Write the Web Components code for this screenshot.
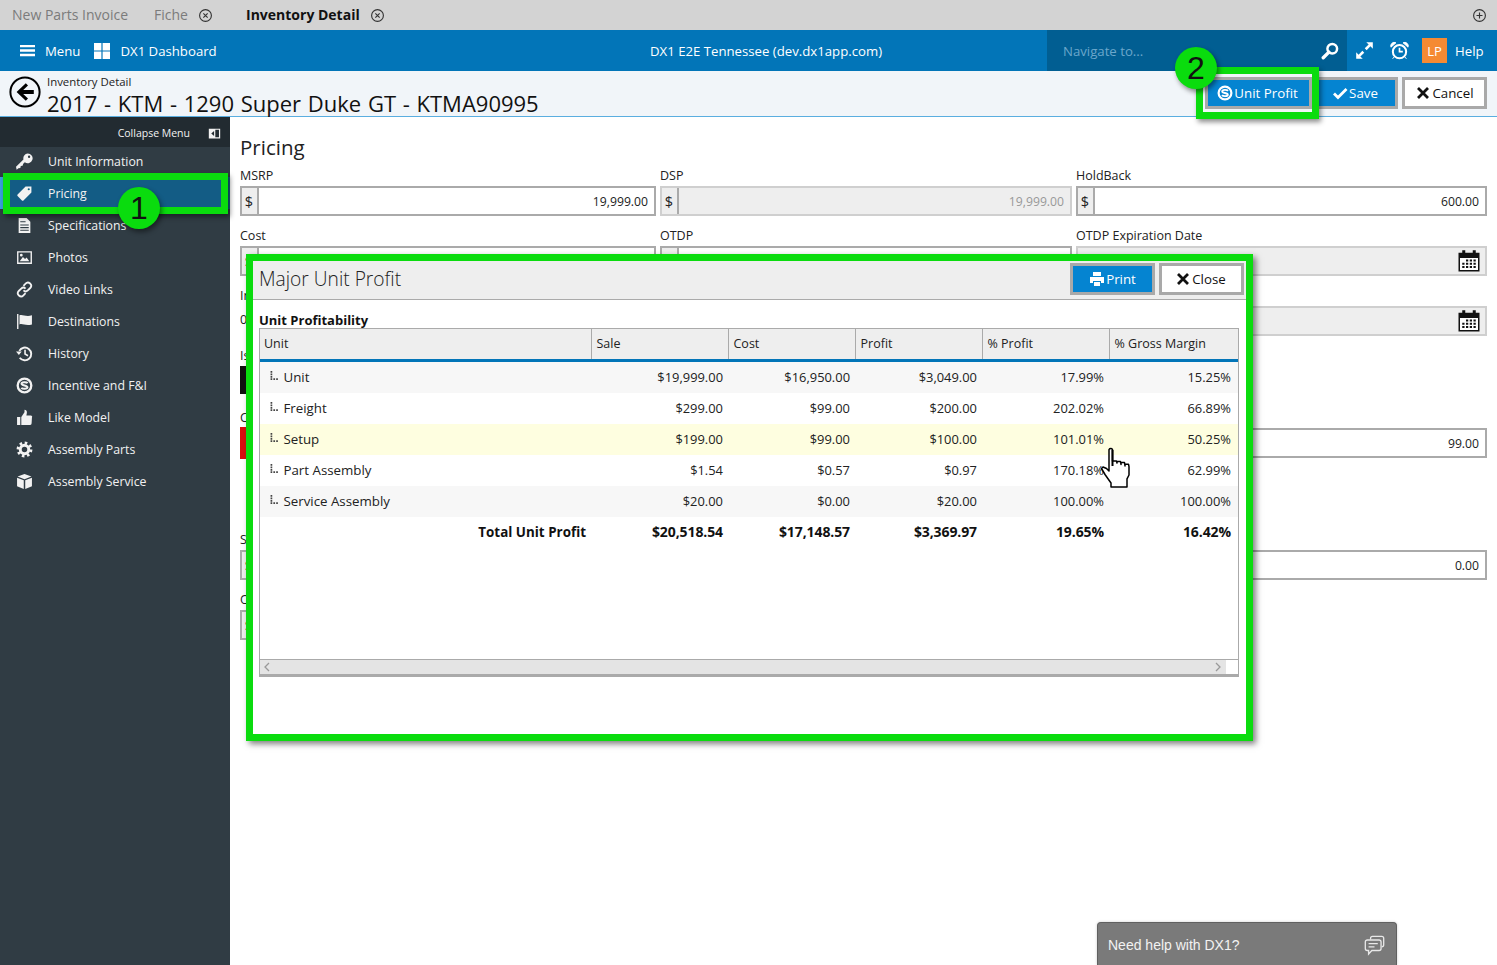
<!DOCTYPE html>
<html>
<head>
<meta charset="utf-8">
<title>Inventory Detail</title>
<style>
    html, body { margin: 0; height: 965px; overflow: hidden; background: #fff; }
    body { font-family: "Open Sans", "Noto Sans", sans-serif; font-size: 12.5px; color: #222; position: relative; }
    .shell { display: flex; height: 848px; }
</style>
</head>
<body>
<dx-tabs></dx-tabs>
<dx-nav></dx-nav>
<dx-titlebar></dx-titlebar>
<div class="shell">
    <dx-sidebar></dx-sidebar>
    <dx-pricing></dx-pricing>
</div>
<dx-modal></dx-modal>
<dx-callout kind="box" style="left:3px;top:173px;width:225px;height:41px"></dx-callout>
<dx-callout kind="box" style="left:1196px;top:67px;width:123px;height:52px"></dx-callout>
<dx-callout kind="num" style="left:118px;top:187px">1</dx-callout>
<dx-callout kind="num" style="left:1175px;top:47px">2</dx-callout>
<dx-hand></dx-hand>
<dx-chat></dx-chat>

<script>
const ICONS = {
    close: '<circle cx="8" cy="8" r="6.3" fill="none" stroke="currentColor" stroke-width="1.2"/><path d="M5.7 5.7l4.6 4.6M10.3 5.7l-4.6 4.6" stroke="currentColor" stroke-width="1.2"/>',
    plus: '<circle cx="8" cy="8" r="6.3" fill="none" stroke="currentColor" stroke-width="1.2"/><path d="M8 4.8v6.4M4.8 8h6.4" stroke="currentColor" stroke-width="1.2"/>',
    menu: '<path d="M0 2h16v2.6H0zM0 6.7h16v2.6H0zM0 11.4h16V14H0z"/>',
    grid: '<path d="M0 0h7.4v7.4H0zM8.6 0H16v7.4H8.6zM0 8.6h7.4V16H0zM8.6 8.6H16V16H8.6z"/>',
    search: '<circle cx="10" cy="6" r="4.3" fill="none" stroke="currentColor" stroke-width="2.2"/><path d="M7 9L2 14" stroke="currentColor" stroke-width="3" stroke-linecap="round"/>',
    expand: '<path d="M9.5 1H15v5.5l-2-2-3.2 3.2-1.6-1.6L11.5 3zM6.5 15H1V9.5l2 2 3.2-3.2 1.6 1.6L4.500 13z"/>',
    alarm: '<circle cx="8" cy="9" r="5.6" fill="none" stroke="currentColor" stroke-width="1.7"/><path d="M8 5.700V9h2.800" fill="none" stroke="currentColor" stroke-width="1.4"/><path d="M.8 5.200A3 3 0 0 1 5 1.500zM15.200 5.200A3 3 0 0 0 11 1.500zM3.800 13l-1.600 2M12.200 13l1.600 2" fill="currentColor" stroke="currentColor" stroke-width=".8"/>',
    back: '<circle cx="8" cy="8" r="7.3" fill="none" stroke="currentColor" stroke-width="1"/><path d="M8.400 3.600L3.800 8l4.600 4.400 1.100-1.100L7.100 9h5.300V7H7.100l2.400-2.300z"/>',
    profit: '<circle cx="8" cy="8" r="6.400" fill="none" stroke="currentColor" stroke-width="2.200"/><path d="M11 5.800C10 4.600 5.200 4.400 5.200 6.400 5.200 8.200 10.800 7.800 10.800 9.700 10.800 11.600 6 11.400 5 10.200" fill="none" stroke="currentColor" stroke-width="1.900"/>',
    check: '<path d="M2 8.500l4 4L14.500 4" fill="none" stroke="currentColor" stroke-width="2.800"/>',
    cross: '<path d="M3 3l10 10M13 3L3 13" fill="none" stroke="currentColor" stroke-width="2.800"/>',
    print: '<path d="M4 1h8v4H4zM1 6h14v6h-3v-2H4v2H1zM5 11h6v4H5z"/>',
    key: '<path fill-rule="evenodd" d="M11 .4a4.600 4.600 0 1 1-2.700 8.300L6.800 10.200 6.200 12l-1.700.3-.4 1.700-1.800.3L.6 15.800 0 13l7-7A4.600 4.600 0 0 1 11 .4zm1.300 2a1.100 1.100 0 1 0 0 2.200 1.100 1.100 0 0 0 0-2.200z"/>',
    tag: '<path fill-rule="evenodd" d="M9 1.500h5.500V7L7 14.500a1 1 0 0 1-1.400 0L1.500 10.400a1 1 0 0 1 0-1.400zm3 1.500a1 1 0 1 0 0 2 1 1 0 0 0 0-2z"/>',
    doc: '<path fill-rule="evenodd" d="M2.500 1H10l3.500 3.500V15h-11zM4 4v1h5V4zm0 3v1h8V7zm0 2.500v1h8v-1zM4 12v1h8v-1z"/>',
    photo: '<path fill-rule="evenodd" d="M1 2h14v12H1zm1.300 1.300v9.400h11.400V3.300zM3.500 11.500l3-4 2 2 1.500-1.500 2.500 3.500zM5 4.500a1.300 1.300 0 1 1 0 2.600 1.300 1.300 0 0 1 0-2.600z"/>',
    link: '<path d="M7 4.500l2-2a2.900 2.900 0 0 1 4.400 4.100l-2.300 2.300a2.900 2.900 0 0 1-4.100 0M9 11.500l-2 2a2.900 2.900 0 0 1-4.400-4.100l2.300-2.300a2.900 2.900 0 0 1 4.100 0" fill="none" stroke="currentColor" stroke-width="1.700"/>',
    flag: '<path d="M1 1h1.300v14H1zM3.300 2.200C6 .8 9 4 15 2.200v8.600C9 12.500 6 9.500 3.300 10.800z"/>',
    history: '<path d="M3.100 5.500A6 6 0 1 1 3.500 12" fill="none" stroke="currentColor" stroke-width="1.800"/><path d="M0 6.200h5.400L2.700 9.500z"/><path d="M8.500 4.500v4l2.800 1.600" fill="none" stroke="currentColor" stroke-width="1.500"/>',
    thumb: '<path d="M1 7.500h3V15H1zM5 7.500L8 3V.8c1.700 0 2.500 1.200 2.200 3L9.800 6H14a1.300 1.300 0 0 1 1 2l-.3 5.500A1.500 1.500 0 0 1 13.300 15H5z"/>',
    gear: '<circle cx="8" cy="8" r="4" fill="none" stroke="currentColor" stroke-width="2.800"/><circle cx="8" cy="8" r="6.200" fill="none" stroke="currentColor" stroke-width="2.500" stroke-dasharray="2.400 2.470"/>',
    cube: '<path d="M8 1l6.500 2.400L8 5.800 1.500 3.400zM1 4.500l6.300 2.400V15L1 12.500zM15 4.500L8.700 6.900V15l6.300-2.500z"/>',
    collapse: '<path fill-rule="evenodd" d="M1 2h14v12H1zm8 1.500v9h4.500v-9zM7.500 5L4 8l3.500 3z"/>',
    calendar: '<path fill="#fff" d="M2 5h12v9H2z"/><path fill-rule="evenodd" d="M1 2.500h2.500V.8h2v1.700h5V.8h2v1.700H15V15H1zM2 6v8h12V6z"/><path d="M6 7h1.500v1.300H6zM8.500 7H10v1.300H8.500zM11 7h1.500v1.300H11zM3.500 9.200H5v1.300H3.500zM6 9.200h1.500v1.300H6zM8.500 9.200H10v1.300H8.500zM11 9.200h1.500v1.300H11zM3.500 11.400H5v1.300H3.500zM6 11.400h1.500v1.300H6zM8.500 11.400H10v1.300H8.500zM11 11.400h1.500v1.300H11z"/>',
    tree: '<path d="M1 0h3v3H1zM1 4.500h3v3H1zM1 9h3v3H1zM1 13h3v3H1zM6 13h3v3H6zM11 13h3v3h-3z"/>',
    chat: '<path d="M5 3.500V2.500a1.500 1.500 0 0 1 1.500-1.500h7A1.500 1.500 0 0 1 15 2.500v5A1.500 1.500 0 0 1 13.500 9" fill="none" stroke="currentColor" stroke-width="1"/><path d="M2.500 3.800h9A1.500 1.500 0 0 1 13 5.300v5a1.500 1.500 0 0 1-1.500 1.500H6L3.500 14.500v-2.700h-1A1.500 1.500 0 0 1 1 10.300v-5a1.500 1.500 0 0 1 1.500-1.500zM3.500 6.500h7M3.500 9h4.500" fill="none" stroke="currentColor" stroke-width="1"/>'
};

const icon = (name, size, style = '') =>
    `<svg viewBox="0 0 16 16" width="${size}" height="${size}" fill="currentColor" style="flex:none;${style}">${ICONS[name]}</svg>`;

class DxTabs extends HTMLElement {
    connectedCallback() {
        this.attachShadow({ mode: 'open' }).innerHTML = `
            <style>
                :host { display: flex; align-items: center; height: 30px; background: #d3d3d3; font-size: 14px; color: #7b7b7b; }
                span { display: inline-block; margin-top: -2px; }
                svg { color: #333; }
                .first { margin-left: 12px; width: 142px; }
                .second { width: 34px; margin-right: 10px; }
                .active { margin-left: 33px; color: #111; font-weight: 700; width: 114px; white-space: nowrap; margin-right: 10px; }
                .plus { margin: 0 10px 0 auto; }
            </style>
            <span class="first">New Parts Invoice</span>
            <span class="second">Fiche</span>${icon('close', 15)}
            <span class="active">Inventory Detail</span>${icon('close', 15)}
            <span class="plus" style="margin-top:0">${icon('plus', 15, 'display:block')}</span>`;
    }
}

class DxNav extends HTMLElement {
    connectedCallback() {
        this.attachShadow({ mode: 'open' }).innerHTML = `
            <style>
                :host { display: flex; align-items: center; height: 41px; background: #0275b8; color: #fff; font-size: 13.2px; position: relative; }
                .left { display: flex; align-items: center; padding-left: 20px; width: 630px; flex: none; box-sizing: content-box; }
                .center { width: 397px; flex: none; }
                .search { flex: none; width: 300px; height: 41px; box-sizing: border-box; background: #015e92; color: #6ba7cb; display: flex; align-items: center; padding: 0 8px 0 16px; justify-content: space-between; }
                .search svg { color: #fff; }
                .right { display: flex; align-items: center; padding-left: 8px; }
                .lp { width: 25px; height: 25px; background: #f58a33; display: flex; align-items: center; justify-content: center; font-size: 13px; margin: 0 8px 0 13px; }
            </style>
            <div class="left">
                ${icon('menu', 15)}<span style="margin:0 14px 0 10px">Menu</span>
                ${icon('grid', 16)}<span style="margin-left:10px">DX1 Dashboard</span>
            </div>
            <div class="center">DX1 E2E Tennessee (dev.dx1app.com)</div>
            <div class="search"><span>Navigate to...</span>${icon('search', 18)}</div>
            <div class="right">
                ${icon('expand', 19)}<span style="width:16px"></span>${icon('alarm', 19)}
                <span class="lp">LP</span><span>Help</span>
            </div>`;
    }
}

class DxButton extends HTMLElement {
    connectedCallback() {
        const light = this.hasAttribute('light');
        this.attachShadow({ mode: 'open' }).innerHTML = `
            <style>
                :host { display: inline-flex; align-items: center; justify-content: center; gap: 1px; box-sizing: border-box; height: 32px; border: 3px solid #a9a9a9; font-size: 13.3px;
                        background: ${light ? '#fff' : '#0584d1'}; color: ${light ? '#111' : '#fff'}; }
            </style>
            ${icon(this.getAttribute('icon'), 16)}<slot></slot>`;
    }
}

class DxTitlebar extends HTMLElement {
    connectedCallback() {
        this.attachShadow({ mode: 'open' }).innerHTML = `
            <style>
                :host { display: flex; align-items: stretch; height: 46px; box-sizing: border-box; background: #f1f5f9; border-bottom: 1px solid #5aaee0; color: #111; }
                .text { flex: 1; white-space: nowrap; }
                .crumb { font-size: 11.4px; line-height: 14px; margin-top: 4px; color: #222; }
                h1 { margin: 0; font-weight: 400; font-size: 22px; line-height: 28px; word-spacing: 1px; }
                .actions { display: flex; align-items: center; gap: 4px; padding: 0 10px 0 0; margin-top: -1px; }
                .unit { width: 107px; padding-right: 2px; box-sizing: border-box; } .save { width: 82px; padding-right: 4px; } .cancel { width: 85px; }
            </style>
            ${icon('back', 32, 'margin:5px 6px 0 9px;color:#000')}
            <div class="text">
                <div class="crumb">Inventory Detail</div>
                <h1>2017 - KTM - 1290 Super Duke GT - KTMA90995</h1>
            </div>
            <div class="actions">
                <dx-button class="unit" icon="profit">Unit Profit</dx-button>
                <dx-button class="save" icon="check">Save</dx-button>
                <dx-button class="cancel" icon="cross" light>Cancel</dx-button>
            </div>`;
    }
}

class DxSidebar extends HTMLElement {
    connectedCallback() {
        const items = [
            ['key', 'Unit Information'], ['tag', 'Pricing'], ['doc', 'Specifications'], ['photo', 'Photos'],
            ['link', 'Video Links'], ['flag', 'Destinations'], ['history', 'History'], ['profit', 'Incentive and F&amp;I'],
            ['thumb', 'Like Model'], ['gear', 'Assembly Parts'], ['cube', 'Assembly Service']
        ];
        const rows = items.map(([ic, label]) =>
            `<div class="item ${label === 'Pricing' ? 'on' : ''}">${icon(ic, 17)}<span>${label}</span></div>`).join('');
        this.attachShadow({ mode: 'open' }).innerHTML = `
            <style>
                :host { display: block; width: 230px; flex: none; background: #303c44; color: #f2f2f2; font-size: 12.3px; }
                .collapse { height: 30px; box-sizing: border-box; padding: 2px 9px 0 0; background: #222b31; display: flex; align-items: center; justify-content: flex-end; gap: 18px; font-size: 10.5px; margin-bottom: -2px; }
                .item { display: flex; align-items: center; height: 32px; padding-left: 16px; }
                .item span { margin-left: 15px; }
                .on { background: #135c85; box-shadow: inset 4px 0 0 #3aa0dc; }
            </style>
            <div class="collapse"><span>Collapse Menu</span>${icon('collapse', 13)}</div>
            ${rows}`;
    }
}

class DxField extends HTMLElement {
    connectedCallback() {
        const dollar = this.hasAttribute('dollar');
        const off = this.hasAttribute('off');
        const cal = this.hasAttribute('cal');
        this.attachShadow({ mode: 'open' }).innerHTML = `
            <style>
                :host { display: block; }
                label { display: block; height: 18px; line-height: 15px; color: #222; white-space: nowrap; }
                .box { display: flex; height: 30px; box-sizing: border-box; border: 2px solid ${off ? '#cfcfcf' : '#aaa'}; background: ${off ? '#eee' : '#fff'}; }
                .add { width: 17px; flex: none; background: #eee; border-right: 2px solid #aaa; display: flex; align-items: center; justify-content: center; font-size: 14.5px; padding-right: 1px; box-sizing: border-box; }
                .val { flex: 1; display: flex; align-items: center; justify-content: flex-end; padding-right: 6px; font-size: 12.2px; color: ${off ? '#999' : '#222'}; }
                svg { color: #111; margin-right: -2px; }
            </style>
            <label>${this.getAttribute('label') || ''}</label>
            <div class="box">
                ${dollar ? '<div class="add">$</div>' : ''}
                <div class="val">${this.getAttribute('value') || ''}${cal ? icon('calendar', 24) : ''}</div>
            </div>`;
    }
}

class DxPricing extends HTMLElement {
    connectedCallback() {
        this.attachShadow({ mode: 'open' }).innerHTML = `
            <style>
                :host { display: block; flex: 1; padding: 0 10px; box-sizing: border-box; }
                h2 { margin: 0; font-size: 20.5px; font-weight: 400; line-height: 60px; height: 51px; color: #222; }
                .grid { display: grid; grid-template-columns: 416px 412px 411px; column-gap: 4px; grid-template-rows: 60px 60px 60px 62px 60px 62px 60px 60px; }
                .plain { line-height: 15px; }
                .black { height: 28px; background: #111; }
                .red { height: 32px; background: #d90f0f; margin-top: -1px; }
            </style>
            <h2>Pricing</h2>
            <div class="grid">
                <dx-field label="MSRP" dollar value="19,999.00"></dx-field>
                <dx-field label="DSP" dollar off value="19,999.00"></dx-field>
                <dx-field label="HoldBack" dollar value="600.00"></dx-field>

                <dx-field label="Cost" dollar></dx-field>
                <dx-field label="OTDP" dollar></dx-field>
                <dx-field label="OTDP Expiration Date" off cal></dx-field>

                <div class="plain"><div style="height:24px">In</div><div>0</div></div>
                <div></div>
                <dx-field off cal></dx-field>

                <div class="plain"><div style="height:18px">Is</div><div class="black"></div></div>
                <div></div><div></div>

                <div class="plain"><div style="height:18px">C</div><div class="red"></div></div>
                <div></div>
                <dx-field value="99.00"></dx-field>

                <div></div><div></div><div></div>

                <dx-field label="S" dollar></dx-field>
                <div></div>
                <dx-field value="0.00"></dx-field>

                <dx-field label="O" dollar></dx-field>
            </div>`;
    }
}

class DxProfitTable extends HTMLElement {
    connectedCallback() {
        const rows = [
            ['Unit', '$19,999.00', '$16,950.00', '$3,049.00', '17.99%', '15.25%', '#f7f7f7'],
            ['Freight', '$299.00', '$99.00', '$200.00', '202.02%', '66.89%', '#fff'],
            ['Setup', '$199.00', '$99.00', '$100.00', '101.01%', '50.25%', '#fefee0'],
            ['Part Assembly', '$1.54', '$0.57', '$0.97', '170.18%', '62.99%', '#fff'],
            ['Service Assembly', '$20.00', '$0.00', '$20.00', '100.00%', '100.00%', '#f7f7f7']
        ];
        const body = rows.map(r => `
            <tr style="background:${r[6]}">
                <td class="name">${icon('tree', 9, 'position:relative;top:-2px;margin-right:1px;color:#444')} ${r[0]}</td>
                ${r.slice(1, 6).map(v => `<td>${v}</td>`).join('')}
            </tr>`).join('');
        this.attachShadow({ mode: 'open' }).innerHTML = `
            <style>
                :host { display: flex; flex-direction: column; height: 349px; box-sizing: border-box; border: solid #aaa; border-width: 1px 1px 3px 1px; color: #222; }
                .scroll { flex: 1; }
                table { border-collapse: collapse; table-layout: fixed; width: 978px; }
                th { box-sizing: border-box; background: #eee; font-weight: 400; text-align: left; padding: 0 4px 0 5px; border-right: 1px solid #aaa; border-bottom: 3px solid #0275b8; height: 31px; }
                th:first-child { padding-left: 4px; }
                th:last-child { border-right: 0; }
                td { height: 31px; padding: 0 5px 0 0; font-size: 12.9px; text-align: right; white-space: nowrap; }
                td:last-child { padding-right: 7px; }
                td.name { text-align: left; padding-left: 10px; font-size: 13.3px; }
                .total td { font-weight: 700; font-size: 14px; letter-spacing: -.1px; color: #111; line-height: 29px; vertical-align: baseline; }
                .total td:first-child { font-size: 13.4px; letter-spacing: 0; }
                .bar { height: 14px; background: #e4e4e4; border-top: 1px solid #aaa; display: flex; align-items: center; color: #999; font-size: 0; }
                .bar svg { margin: 0 0 0 3px; }
                .bar i { width: 12px; height: 100%; background: #fff; }
            </style>
            <div class="scroll">
                <table>
                    <colgroup><col style="width:331px"><col style="width:137px"><col style="width:127px"><col style="width:127px"><col style="width:127px"><col style="width:129px"></colgroup>
                    <thead><tr><th>Unit</th><th>Sale</th><th>Cost</th><th>Profit</th><th>% Profit</th><th>% Gross Margin</th></tr></thead>
                    <tbody>
                        ${body}
                        <tr class="total"><td>Total Unit Profit</td><td>$20,518.54</td><td>$17,148.57</td><td>$3,369.97</td><td>19.65%</td><td>16.42%</td></tr>
                    </tbody>
                </table>
            </div>
            <div class="bar">
                <svg width="8" height="10" viewBox="0 0 8 10"><path d="M6 1L2 5l4 4" fill="none" stroke="currentColor" stroke-width="1.300"/></svg>
                <svg style="margin-left:auto;margin-right:4px" width="8" height="10" viewBox="0 0 8 10"><path d="M2 1l4 4-4 4" fill="none" stroke="currentColor" stroke-width="1.300"/></svg>
                <i></i>
            </div>`;
    }
}

class DxModal extends HTMLElement {
    connectedCallback() {
        this.attachShadow({ mode: 'open' }).innerHTML = `
            <style>
                :host { position: absolute; left: 246px; top: 254px; width: 1007px; height: 487px; box-sizing: border-box; background: #fff; border: 7px solid #0adc0e; box-shadow: 3px 3px 6px rgba(0,0,0,.5); }
                header { display: flex; align-items: center; height: 39px; box-sizing: border-box; background: #eee; border-bottom: 1px solid #aaa; padding: 0 2px 0 6px; }
                h3 { flex: 1; margin: 0 0 4px; font-size: 19.2px; font-weight: 300; color: #222; }
                header dx-button { height: 32px; margin-top: -2px; }
                .print { width: 85px; margin-right: 4px; }
                .close { width: 85px; padding-right: 2px; box-sizing: border-box; }
                section { padding: 13px 7px 0 6px; }
                h4 { margin: 0; font-size: 13px; line-height: 15px; color: #111; font-weight: 700; }
            </style>
            <header>
                <h3>Major Unit Profit</h3>
                <dx-button class="print" icon="print">Print</dx-button>
                <dx-button class="close" icon="cross" light>Close</dx-button>
            </header>
            <section>
                <h4>Unit Profitability</h4>
                <dx-profit-table></dx-profit-table>
            </section>`;
    }
}

class DxCallout extends HTMLElement {
    connectedCallback() {
        const num = this.getAttribute('kind') === 'num';
        this.attachShadow({ mode: 'open' }).innerHTML = `
            <style>
                :host { position: absolute; box-sizing: border-box; box-shadow: 2px 3px 5px rgba(0,0,0,.45); pointer-events: none;
                    ${num
                        ? 'width: 42px; height: 42px; border-radius: 50%; background: #0adc0e; display: flex; align-items: center; justify-content: center; font: 32px "Liberation Sans", sans-serif; color: #111;'
                        : 'border: 7px solid #0adc0e;'}
                }
            </style>
            <slot></slot>`;
    }
}

class DxHand extends HTMLElement {
    connectedCallback() {
        this.attachShadow({ mode: 'open' }).innerHTML = `
            <style>:host { position: absolute; left: 1100px; top: 446px; width: 32px; height: 44px; }</style>
            <svg width="32" height="44" viewBox="0 0 32 44">
                <path d="M9 3.500a2 2 0 0 1 3.500 0V15l4 0 .5 2V15.500h3.500l.5 3v-2h3.500l.5 3.500v-1.800h3.500l.5 2.500 0 8.300-2 3.800V41H11V37L5 28.500 1.500 22.500 3 21 6.500 22.500 9 25z" fill="#fff" stroke="#000" stroke-width="1.500" stroke-linejoin="round"/>
                <path d="M12.500 4v16" stroke="#000" stroke-width="2"/>
            </svg>`;
    }
}

class DxChat extends HTMLElement {
    connectedCallback() {
        this.attachShadow({ mode: 'open' }).innerHTML = `
            <style>
                :host { position: absolute; left: 1097px; top: 922px; width: 300px; height: 43px; box-sizing: border-box; background: #7a7a7a; border: 1px solid #606060; border-bottom: 0; border-radius: 4px 4px 0 0; display: flex; align-items: center; justify-content: space-between; padding: 2px 11px 0 10px; font: 14px "Liberation Sans", sans-serif; color: #f2f2f2; box-shadow: 0 0 3px rgba(0,0,0,.2); }
            </style>
            <span>Need help with DX1?</span>${icon('chat', 21, 'color:#e8e8e8')}`;
    }
}

customElements.define('dx-tabs', DxTabs);
customElements.define('dx-nav', DxNav);
customElements.define('dx-button', DxButton);
customElements.define('dx-titlebar', DxTitlebar);
customElements.define('dx-sidebar', DxSidebar);
customElements.define('dx-field', DxField);
customElements.define('dx-pricing', DxPricing);
customElements.define('dx-profit-table', DxProfitTable);
customElements.define('dx-modal', DxModal);
customElements.define('dx-callout', DxCallout);
customElements.define('dx-hand', DxHand);
customElements.define('dx-chat', DxChat);
</script>
</body>
</html>
